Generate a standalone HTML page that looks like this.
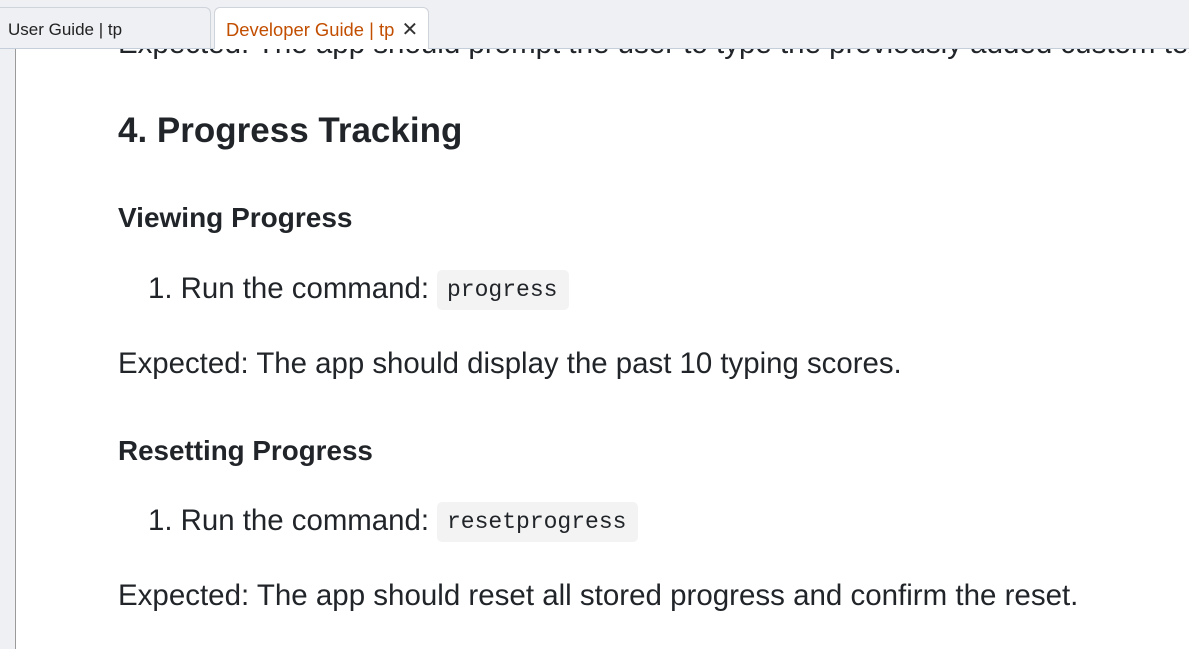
<!DOCTYPE html>
<html><head><meta charset="utf-8"><style>
body{margin:0;width:1189px;height:649px;overflow:hidden;background:#fff;font-family:"Liberation Sans",sans-serif;color:#212529;position:relative}
.tabbar{position:absolute;left:0;top:0;width:1189px;height:48px;background:#eff0f4;border-bottom:1px solid #c5cedb}
.tab{position:absolute;top:7px;height:41px;border:1px solid #cfd3da;border-bottom:none;border-radius:6px 6px 0 0;line-height:44px;box-sizing:border-box;white-space:nowrap}
.strip{position:absolute;left:0;top:49px;width:15px;height:600px;background:#eff0f4;border-right:1px solid #9a9a9a}
.t{position:absolute;white-space:nowrap;left:118px}
.code{position:absolute;background:#f3f3f3;border-radius:5px;font-family:"Liberation Mono",monospace;font-size:23px;line-height:40px;padding:0 10px;color:#212529}
</style></head><body>
<div class="t" style="top:27px;font-size:29.5px;">Expected: The app should prompt the user to type the previously added custom text</div>
<div class="tabbar" style="height:48px;background:transparent;border:none"></div>
<div style="position:absolute;left:0;top:0;width:1189px;height:48px;background:#eff0f4;border-bottom:1px solid #c5cedb;clip-path:inset(0 0 0 0)"></div>
<div class="tab" style="left:-10px;width:221px;background:#eff0f4;padding-left:17px;color:#222;font-size:17px">User Guide | tp</div>
<div class="tab" style="left:214px;width:215px;background:#fff;padding-left:11px;color:#c24e00;height:42px;font-size:18.4px">Developer Guide | tp <span style="color:#333;font-size:20px;margin-left:2px">✕</span></div>
<div class="strip"></div>
<div class="t" style="top:111px;font-size:35px;font-weight:bold;">4. Progress Tracking</div>
<div class="t" style="top:202px;font-size:28px;font-weight:bold;">Viewing Progress</div>
<div class="t" style="left:148px;top:272px;font-size:29.4px;">1. Run the command:</div>
<div class="code" style="left:437px;top:270px;width:112px">progress</div>
<div class="t" style="top:347px;font-size:29.4px;">Expected: The app should display the past 10 typing scores.</div>
<div class="t" style="top:435px;font-size:27.8px;font-weight:bold;">Resetting Progress</div>
<div class="t" style="left:148px;top:504px;font-size:29.4px;">1. Run the command:</div>
<div class="code" style="left:437px;top:502px;width:181px">resetprogress</div>
<div class="t" style="top:579px;font-size:29.5px;">Expected: The app should reset all stored progress and confirm the reset.</div>
</body></html>
